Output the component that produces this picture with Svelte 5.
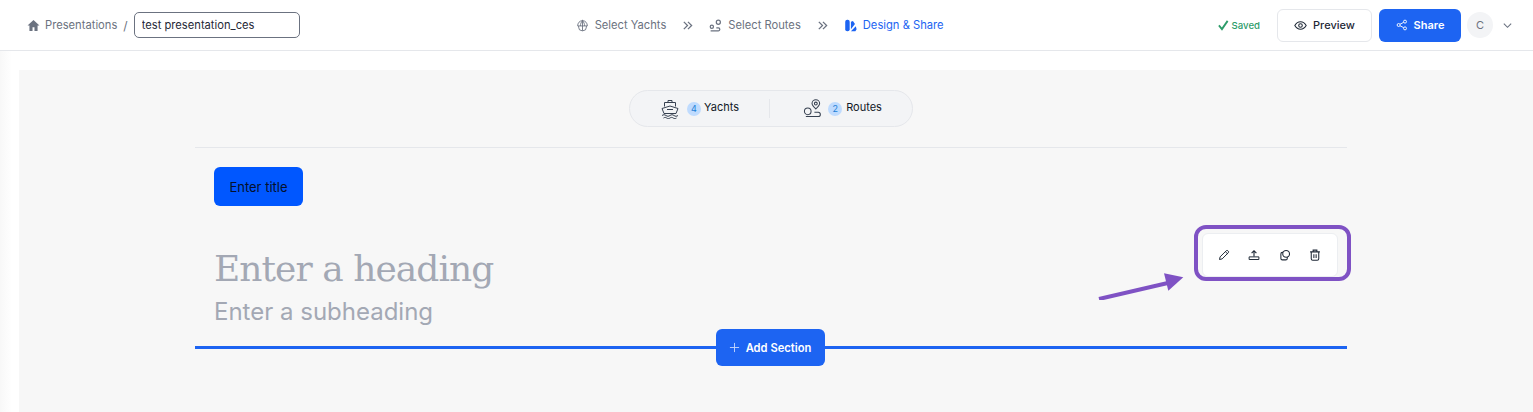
<script>
  let title = 'test presentation_ces';
</script>

<header class="topbar">
  <div class="crumbs">
    <svg class="home" viewBox="0 0 24 24" width="13" height="13"><path d="M12 2 1 12h3.500v10h5.700v-7h3.600v7h5.700V12H23z" fill="currentColor" /></svg>
    <span class="crumb">Presentations</span>
    <span class="slash">/</span>
    <input class="name" value={title} />
  </div>

  <nav class="steps">
    <span class="step">
      <svg viewBox="0 0 16 16" width="13" height="13" fill="none" stroke="currentColor" stroke-width="1.100"><path d="M8 1v1M2 8.500c0-3.500 2.500-6.500 6-6.500s6 3 6 6.500zM8 2v12.500M8 2C6.300 3.800 5.500 6 5.500 8.500M8 2c1.700 1.800 2.500 4 2.500 6.500M3.200 8.500v1.500a4.500 4.500 0 0 0 4.500 4.500h.6a4.500 4.500 0 0 0 4.500-4.500V8.500" /></svg>
      Select Yachts
    </span>
    <svg class="chev" viewBox="0 0 12 12" width="11" height="11" fill="none" stroke="currentColor" stroke-width="1.400"><path d="M2 2l4 4-4 4M6.500 2l4 4-4 4" /></svg>
    <span class="step">
      <svg viewBox="0 0 16 16" width="13" height="13" fill="none" stroke="currentColor" stroke-width="1.500"><circle cx="11.500" cy="4" r="2.500" /><circle cx="3.500" cy="9.500" r="2" /><path d="M2 14.500h9.500a1.800 1.800 0 0 0 0-3.600H9" /></svg>
      Select Routes
    </span>
    <svg class="chev" viewBox="0 0 12 12" width="11" height="11" fill="none" stroke="currentColor" stroke-width="1.400"><path d="M2 2l4 4-4 4M6.500 2l4 4-4 4" /></svg>
    <span class="step active">
      <svg viewBox="0 0 16 16" width="13" height="13" fill="currentColor"><rect x="1.500" y="1" width="5.500" height="14" rx="2.500" /><path d="M8.500 3.500l2.500-1 2.500 3.500-5 6.500zM8.500 15l6-6 1 3.500-1.500 2.500z" /></svg>
      Design &amp; Share
    </span>
  </nav>

  <div class="actions">
    <span class="saved">
      <svg viewBox="0 0 12 12" width="11" height="12" fill="none" stroke="currentColor" stroke-width="2"><path d="M1 6.500 4.300 10.500 10.500 1.500" /></svg>
      Saved
    </span>
    <button class="btn ghost">
      <svg viewBox="0 0 16 16" width="13" height="13" fill="none" stroke="currentColor" stroke-width="1.300"><path d="M1 8c1.800-3 4.200-4.500 7-4.500S13.200 5 15 8c-1.800 3-4.200 4.500-7 4.500S2.800 11 1 8z" /><circle cx="8" cy="8" r="2.200" /></svg>
      Preview
    </button>
    <button class="btn primary">
      <svg viewBox="0 0 16 16" width="12" height="12" fill="none" stroke="currentColor" stroke-width="1.200"><circle cx="3.500" cy="8" r="2" /><circle cx="12" cy="3.500" r="2" /><circle cx="12" cy="12.500" r="2" /><path d="M5.300 7 10.200 4.500M5.300 9l4.900 2.500" /></svg>
      Share
    </button>
    <span class="avatar">C</span>
    <svg class="caret" viewBox="0 0 12 12" width="11" height="11" fill="none" stroke="currentColor" stroke-width="1.200"><path d="M2 4l4 4 4-4" /></svg>
  </div>
</header>

<main class="page">
  <div class="canvas">
    <div class="column">
      <div class="counts">
        <div class="count yachts">
          <svg viewBox="0 0 20 20" width="20" height="20" fill="none" stroke="#374151" stroke-width="1"><path d="M8 3.500V1.500h4v2M4.500 7.500V3.500h11v4M2 9.500 10 7l8 2.500-2 5h-12zM7 10.500h6M2 16.500c1.300-1 2.700-1 4 0s2.700 1 4 0 2.700-1 4 0 2.700 1 4 0M3.500 19c1.300-.8 2.200-.8 3.200 0s2.300.8 3.300 0 2.200-.8 3.200 0 2.300.8 3.300 0" /></svg>
          <span class="badge">4</span>
          <span class="label">Yachts</span>
        </div>
        <div class="count routes">
          <svg viewBox="0 0 20 20" width="19" height="19" fill="none" stroke="#374151" stroke-width="1.100"><path d="M13.500 10.500c-2.500-2.500-4-4-4-5.800a4 4 0 0 1 8 0c0 1.800-1.500 3.300-4 5.800z" /><circle cx="13.500" cy="4.800" r="1.500" /><circle cx="5" cy="13" r="3.500" /><path d="M3 18.500h13a1.500 1.500 0 0 0 0-4.500h-4" /></svg>
          <span class="badge">2</span>
          <span class="label">Routes</span>
        </div>
      </div>

      <div class="rule"></div>

      <button class="title-btn">Enter title</button>

      <h1>Enter a heading</h1>
      <p class="sub">Enter a subheading</p>

      <div class="add-row">
        <button class="add">
          <svg viewBox="0 0 12 12" width="11" height="11" fill="none" stroke="currentColor" stroke-width="1"><path d="M6 1v10M1 6h10" /></svg>
          Add Section
        </button>
      </div>

      <div class="tools">
        <svg viewBox="0 0 16 16" width="12" height="12" fill="none" stroke="#1f2937" stroke-width="1.300"><path d="M2 14l.8-3.500L11 2.300a1.500 1.500 0 0 1 2.100 0l.6.6a1.500 1.500 0 0 1 0 2.100L5.500 13.200zM9.800 3.500l2.700 2.700" /></svg>
        <svg viewBox="0 0 16 16" width="12" height="12" fill="none" stroke="#1f2937" stroke-width="1.500"><path d="M8 10V2.500M4.800 5.500 8 2.300l3.200 3.200" /><path d="M1.500 10.500h13v3.500h-13z" stroke-width="1.300" /></svg>
        <svg viewBox="0 0 16 16" width="12" height="12" fill="none" stroke="#1f2937" stroke-width="1.400"><rect x="2.500" y="4.500" width="8.500" height="10" rx="2" /><circle cx="9.500" cy="6.500" r="4.500" fill="#fff" /></svg>
        <svg viewBox="0 0 16 16" width="12" height="12" fill="none" stroke="#1f2937" stroke-width="1.400"><path d="M1.500 3.800h13M5.500 3.500V1.500h5v2M3 4v9a2 2 0 0 0 2 2h6a2 2 0 0 0 2-2V4M6.500 7v5M9.500 7v5" /></svg>
      </div>

      <!-- annotation drawn over the screenshot -->
      <div class="ring"></div>
      <svg class="arrow" viewBox="0 0 90 32" width="90" height="32"><path d="M1 31 72 14.500" stroke="#7f52c4" stroke-width="4" fill="none" /><path d="M66 5.300 85.300 9.300 70.300 22.700z" fill="#7f52c4" /></svg>
    </div>
  </div>
</main>

<style>
  :global(body) {
    background: #fff;
    font-family: Inter, "Noto Sans", sans-serif;
    overflow: hidden;
  }

  button {
    font-family: inherit;
    cursor: pointer;
  }

  .topbar {
    display: flex;
    align-items: center;
    justify-content: space-between;
    height: 50px;
    padding: 0 20px 0 27px;
    background: #fff;
    border-bottom: 1px solid #e5e7eb;
  }

  .crumbs {
    display: flex;
    align-items: center;
    font-size: 11.200px;
    color: #6b7280;
  }

  .home {
    color: #6b7280;
    margin-right: 5px;
  }

  .slash {
    margin: 0 6px 0 6px;
    font-size: 12px;
  }

  .name {
    box-sizing: border-box;
    width: 166px;
    height: 26px;
    padding: 0 7px;
    font: 11.200px Inter, sans-serif;
    color: #1f2937;
    background: #fff;
    border: 1px solid #6b7280;
    border-radius: 5px;
    outline: none;
  }

  .steps {
    display: flex;
    align-items: center;
    gap: 16px;
    margin-left: 2px;
    font-size: 11.200px;
    color: #6b7280;
  }

  .step {
    display: flex;
    align-items: center;
    gap: 6px;
  }

  .step.active {
    color: #1d64f2;
  }

  .actions {
    display: flex;
    align-items: center;
  }

  .saved {
    display: flex;
    align-items: center;
    gap: 3px;
    margin-right: 17px;
    font-size: 9.600px;
    font-weight: 500;
    color: #2d9c6a;
  }

  .btn {
    display: flex;
    align-items: center;
    justify-content: center;
    gap: 6px;
    box-sizing: border-box;
    height: 33px;
    font-size: 11px;
    font-weight: 500;
    border-radius: 6px;
  }

  .ghost {
    width: 95px;
    color: #1f2937;
    background: #fff;
    border: 1px solid #e5e7eb;
    margin-right: 7px;
  }

  .primary {
    width: 82px;
    color: #fff;
    background: #1d64f2;
    border: none;
    font-weight: 600;
    margin-right: 6px;
  }

  .avatar {
    display: grid;
    place-items: center;
    width: 26px;
    height: 26px;
    border-radius: 50%;
    font-size: 11px;
    color: #6b7280;
    background: #f3f4f6;
  }

  .caret {
    margin-left: 9px;
    color: #6b7280;
  }

  .page {
    padding: 19px 0 0 19px;
    background: linear-gradient(90deg, #f8f8f8, #fff 12px);
  }

  .canvas {
    height: 342px;
    padding-top: 20px;
    box-sizing: border-box;
    background: #f7f7f7;
  }

  .column {
    position: relative;
    width: 1152px;
    margin-left: 176px;
  }

  .counts {
    display: flex;
    box-sizing: border-box;
    width: 284px;
    height: 37px;
    margin-left: 434px;
    background: #f3f4f6;
    border: 1px solid #e5e7eb;
    border-radius: 19px;
  }

  .count {
    flex: 1;
    display: flex;
    align-items: center;
    justify-content: center;
    font-size: 11px;
    color: #111827;
  }

  .yachts {
    padding-right: 2px;
  }

  .routes {
    position: relative;
    padding-left: 2px;
  }

  .routes::before {
    content: '';
    position: absolute;
    left: -2px;
    top: 8px;
    bottom: 8px;
    width: 1px;
    background: #e5e7eb;
  }

  .badge {
    display: grid;
    place-items: center;
    width: 14px;
    height: 14px;
    margin: 0 3px 0 7px;
    border-radius: 50%;
    font-size: 9px;
    color: #1e7fd6;
    background: #bfdbfe;
  }

  .routes .badge {
    margin: 0 4px 0 6px;
  }

  .label {
    margin-top: -3px;
  }

  .rule {
    height: 1px;
    margin-top: 20px;
    background: #e5e7eb;
  }

  .title-btn {
    display: block;
    width: 89px;
    height: 39px;
    margin: 19px 0 0 19px;
    padding: 0;
    font-size: 13px;
    color: #05102a;
    background: #0057ff;
    border: none;
    border-radius: 6px;
  }

  h1 {
    margin: 40px 0 0 19px;
    font: 400 36px/46px "DejaVu Serif", serif;
    letter-spacing: -0.950px;
    color: #a3a8b4;
  }

  .sub {
    margin: 5px 0 0 19px;
    font-size: 24px;
    line-height: 29px;
    color: #a3a8b4;
  }

  .add-row {
    display: flex;
    justify-content: center;
    align-items: center;
    height: 37px;
    margin-top: 3px;
    background: linear-gradient(#1d64f2, #1d64f2) center / 100% 3px no-repeat;
  }

  .add {
    display: flex;
    align-items: center;
    justify-content: center;
    gap: 6px;
    width: 109px;
    height: 37px;
    margin-right: 2px;
    padding: 0;
    font-size: 11.200px;
    font-weight: 600;
    color: #fff;
    background: #1d64f2;
    border: none;
    border-radius: 6px;
  }

  .add svg {
    opacity: 0.75;
  }

  .tools {
    position: absolute;
    left: 1007px;
    top: 143px;
    display: flex;
    align-items: center;
    justify-content: space-between;
    box-sizing: border-box;
    width: 136px;
    height: 44px;
    padding: 0 16px 0 15px;
    background: #fff;
    border: 1px solid #eceef1;
    border-radius: 6px;
  }

  .ring {
    position: absolute;
    left: 999px;
    top: 135px;
    box-sizing: border-box;
    width: 157px;
    height: 56px;
    border: 4px solid #7f52c4;
    border-radius: 12px;
  }

  .arrow {
    position: absolute;
    left: 903px;
    top: 178px;
  }
</style>
